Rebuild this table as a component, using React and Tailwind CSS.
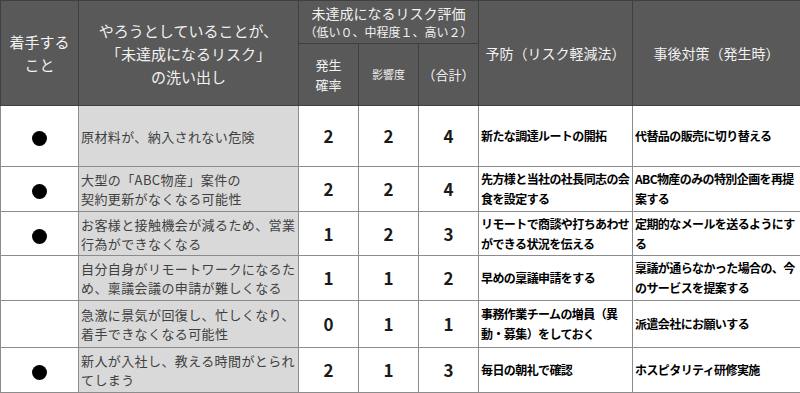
import React from "react";

const rows = [
  { dot: true, risk: "原材料が、納入されない危険", a: 2, b: 2, c: 4, prev: "新たな調達ルートの開拓", post: "代替品の販売に切り替える", h: "h-[61px]" },
  { dot: true, risk: "大型の「ABC物産」案件の\n契約更新がなくなる可能性", a: 2, b: 2, c: 4, prev: "先方様と当社の社長同志の会食を設定する", post: "ABC物産のみの特別企画を再提案する", h: "h-[45px]" },
  { dot: true, risk: "お客様と接触機会が減るため、営業行為ができなくなる", a: 1, b: 2, c: 3, prev: "リモートで商談や打ちあわせができる状況を伝える", post: "定期的なメールを送るようにする", h: "h-[44px]" },
  { dot: false, risk: "自分自身がリモートワークになるため、稟議会議の申請が難しくなる", a: 1, b: 1, c: 2, prev: "早めの稟議申請をする", post: "稟議が通らなかった場合の、今のサービスを提案する", h: "h-[45px]" },
  { dot: false, risk: "急激に景気が回復し、忙しくなり、着手できなくなる可能性", a: 0, b: 1, c: 1, prev: "事務作業チームの増員（異動・募集）をしておく", post: "派遣会社にお願いする", h: "h-[47px]" },
  { dot: true, risk: "新人が入社し、教える時間がとられてしまう", a: 2, b: 1, c: 3, prev: "毎日の朝礼で確認", post: "ホスピタリティ研修実施", h: "h-[45px]" },
];

const font = { fontFamily: '"Noto Sans CJK JP", "Noto Sans", sans-serif' };

export default function App() {
  const hd = "border border-[#404040] bg-[#595959] text-[#f2f2f2] text-center align-middle font-normal";
  const td = "border border-[#8c8c8c] align-middle";
  return (
    <div className="w-[800px] h-[393px] bg-white overflow-hidden" style={font}>
      <table className="table-fixed border-collapse w-[800px]">
        <colgroup>
          <col className="w-[78px]" />
          <col className="w-[220px]" />
          <col className="w-[60px]" />
          <col className="w-[60px]" />
          <col className="w-[60px]" />
          <col className="w-[154px]" />
          <col className="w-[168px]" />
        </colgroup>
        <thead>
          <tr className="h-[43px]">
            <th rowSpan={2} className={hd + " bg-[#262626] text-[15px] leading-[23px]"}>
              着手する<br />こと
            </th>
            <th rowSpan={2} className={hd + " text-[15px] leading-[23px]"}>
              やろうとしていることが、<br />「未達成になるリスク」<br />の洗い出し
            </th>
            <th colSpan={3} className={hd}>
              <div className="text-[14px] leading-[19px]">未達成になるリスク評価</div>
              <div className="text-[12px] leading-[17px]">（低い０、中程度１、高い２）</div>
            </th>
            <th rowSpan={2} className={hd + " text-[14px]"}>予防（リスク軽減法）</th>
            <th rowSpan={2} className={hd + " text-[14px]"}>事後対策（発生時）</th>
          </tr>
          <tr className="h-[62px]">
            <th className={hd + " text-[13px] leading-[20px]"}>発生<br />確率</th>
            <th className={hd + " text-[11px]"}>影響度</th>
            <th className={hd + " text-[13px]"}>（合計）</th>
          </tr>
        </thead>
        <tbody>
          {rows.map((r, i) => (
            <tr key={i} className={r.h}>
              <td className={td + " text-center"}>
                {r.dot && <span className="inline-block w-[15px] h-[15px] rounded-full bg-black align-middle" />}
              </td>
              <td className={td + " bg-[#d9d9d9] text-[#404040] text-[13px] leading-[19px] tracking-[0.4px] pl-[2px] pr-[1px] whitespace-pre-line"}>
                {r.risk}
              </td>
              <td className={td + " text-center text-[17px] font-bold text-[#1a1a1a]"}>{r.a}</td>
              <td className={td + " text-center text-[17px] font-bold text-[#1a1a1a]"}>{r.b}</td>
              <td className={td + " text-center text-[17px] font-bold text-[#1a1a1a]"}>{r.c}</td>
              <td className={td + " text-[12px] leading-[20px] font-bold text-black pl-[2px] pr-0 tracking-[-0.6px]"}>{r.prev}</td>
              <td className={td + " text-[12px] leading-[20px] font-bold text-black pl-[2px] pr-0 tracking-[-0.6px]"}>{r.post}</td>
            </tr>
          ))}
        </tbody>
      </table>
    </div>
  );
}
